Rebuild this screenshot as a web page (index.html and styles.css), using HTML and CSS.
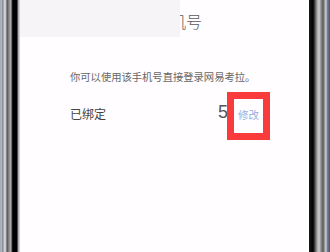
FILE: index.html
```html
<!DOCTYPE html>
<html lang="zh-CN">
<head>
  <meta charset="UTF-8">
  <title>绑定手机号</title>
  <link rel="stylesheet" href="styles.css">
</head>
<body>
  <div class="phone">
    <div class="frame frame-left"></div>

    <div class="screen">
      <!-- 顶部标题 (左边被遮住) -->
      <div class="title">绑定手机号</div>
      <div class="mask"></div>

      <p class="tip">你可以使用该手机号直接登录网易考拉。</p>

      <div class="row">
        <span class="label">已绑定</span>
        <span class="phone-num">5</span>
        <a href="#" class="edit">修改</a>
      </div>
    </div>

    <div class="frame frame-right"></div>
  </div>
</body>
</html>
```

FILE: styles.css
```css
*, *::before, *::after { box-sizing: border-box; }
html, body {
  margin: 0;
  width: 330px;
  height: 252px;
  overflow: hidden;
  background: #fff;
  font-family: "Noto Sans CJK SC", "Noto Sans", sans-serif;
}
.phone {
  display: flex;
  height: 252px;
}
.frame {
  height: 100%;
}
.frame-left {
  width: 20px;
  background: linear-gradient(to right,
    #9096a6 0, #c4c7ce 1px, #7a7c84 3px, #d8d8da 4px, #c0c0c0 6px,
    #505050 7px, #8a8a8a 9px, #b4b4b4 11px, #2a2a2a 12px,
    #000 13px, #000 17px, #9a9a9a 18px, #e8e8e8 20px);
}
.frame-right {
  width: 21px;
  background: linear-gradient(to right,
    #1a1a1a 0, #000 4px, #4c4c4c 6px, #a0a0a0 8px, #d0d0d0 10px,
    #8c8c8c 12px, #5a5a5a 14px, #a8a8a8 16px, #dcdcdc 17px,
    #7e8497 18px, #4a5470 21px);
}
.screen {
  flex: 1;
  position: relative;
  background: #fffdff;
  padding: 0 50px 0 50px;
}
.title {
  text-align: right;
  font-size: 16px;
  color: #5a5a5a;
  padding-top: 11px;
  margin-right: 57px;
  line-height: 20px;
  font-weight: 300;
  white-space: nowrap;
}
/* 截图里盖住标题左侧的浅色块 */
.mask {
  position: absolute;
  top: 0;
  left: 0;
  width: 160px;
  height: 37px;
  background: #f6f4f7;
}
.tip {
  margin: 39px 0 0;
  font-size: 10.3px;
  line-height: 14px;
  color: #666;
  white-space: nowrap;
}
.row {
  display: flex;
  align-items: center;
  margin-top: 18px;
  height: 22px;
}
.label {
  font-size: 12px;
  color: #444;
  flex: 1;
}
.phone-num {
  font-size: 18px;
  line-height: 20px;
  color: #555;
  font-family: "Liberation Sans", sans-serif;
  margin-bottom: 2px;
}
.edit {
  position: relative;
  font-size: 10.5px;
  line-height: 15px;
  color: #93ade2;
  text-decoration: none;
  margin: 3px 0 0 10px;
}
.edit::after {
  content: "";
  position: absolute;
  left: -11px;
  top: -15px;
  width: 43px;
  height: 48px;
  border: 7px solid #fa3b3b;
}
```
